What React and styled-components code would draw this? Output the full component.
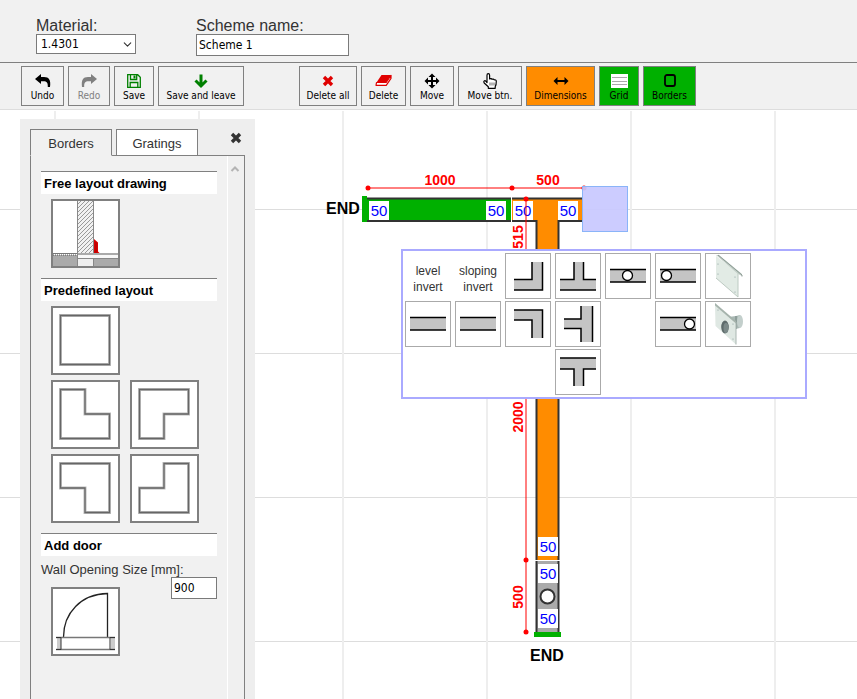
import React, { useState } from "react"
import styled, { createGlobalStyle } from "styled-components"
import { ChevronDown } from "lucide-react"

const GlobalStyle = createGlobalStyle`
    * {
        box-sizing: border-box;
    }

    body {
        margin: 0;
        color: #333;
        background: #fff;
        font-family: "Liberation Sans", Arial, sans-serif;
        font-size: 13px;
    }

    button,
    input,
    select {
        margin: 0;
        border-radius: 0;
        font-family: inherit;
    }
`

const uiFont = `"DejaVu Sans Condensed", "Noto Sans", sans-serif`

const StyledApp = styled.div`
    display: flex;
    flex-direction: column;
    height: 100vh;
    overflow: hidden;
`

const StyledHeader = styled.header`
    display: flex;
    gap: 60px;
    padding: 18px 36px 6px;
    background: #f1f1f1;
    border-bottom: 1px solid #808080;
`

const StyledField = styled.div`
    display: flex;
    flex-direction: column;
    align-items: flex-start;
`

const StyledLabel = styled.label`
    font-size: 16px;
    line-height: 16px;
`

const StyledSelectBox = styled.div`
    position: relative;
    width: 100px;

    svg {
        position: absolute;
        top: 4px;
        right: 2px;
        pointer-events: none;
    }
`

const StyledSelect = styled.select`
    display: block;
    width: 100%;
    height: 20px;
    padding: 0 4px;
    color: #000;
    background: #fff;
    border: 1px solid #7a7a7a;
    font-family: ${uiFont};
    font-size: 12px;
    appearance: none;
`

const StyledInput = styled.input`
    width: ${(props) => props.$width};
    height: 22px;
    padding: 0 2px;
    color: #000;
    background: #fff;
    border: 1px solid #7a7a7a;
    font-family: ${uiFont};
    font-size: 12px;
`

const StyledToolbar = styled.nav`
    display: flex;
    gap: 55px;
    padding: 3px 21px;
    background: #f1f1f1;
    border-bottom: 1px solid #ddd;
`

const StyledToolGroup = styled.div`
    display: flex;
    gap: 4px;
`

const StyledTool = styled.button`
    display: flex;
    flex-direction: column;
    align-items: center;
    width: ${(props) => props.$width}px;
    height: 40px;
    padding: 6px 0 0;
    color: ${(props) => (props.disabled ? "#808080" : "#000")};
    background: ${(props) => props.$background || "#f1f1f1"};
    border: 1px solid #808080;
    font-family: ${uiFont};
    font-size: 10px;
    line-height: 14px;
    white-space: nowrap;

    svg {
        flex: none;
        display: block;
        height: 16px;
        color: ${(props) => props.$iconColor || "inherit"};
    }
`

const StyledCanvas = styled.main`
    position: relative;
    display: flex;
    flex: 1;
    min-height: 0;
`

const StyledDrawing = styled.svg`
    position: absolute;
    inset: 0;
    width: 100%;
    height: 100%;
    font-family: "Liberation Sans", Arial, sans-serif;
`

const StyledSidebar = styled.aside`
    position: relative;
    display: flex;
    flex-direction: column;
    width: 235px;
    margin: 9px 0 0 20px;
    padding: 10px 10px 0;
    background: #eee;
`

const StyledTabs = styled.div`
    display: flex;
    align-items: flex-start;
    gap: 4px;
`

const StyledTab = styled.button`
    position: relative;
    width: 82px;
    height: 27px;
    margin-bottom: -1px;
    padding: 2px 0 0;
    color: #333;
    background: ${(props) => (props.$active ? "#f1f1f1" : "#fff")};
    border: 1px solid #808080;
    border-bottom-color: ${(props) => (props.$active ? "#f1f1f1" : "#808080")};
    font-size: 13px;
    z-index: 1;
`

const StyledClose = styled.button`
    display: flex;
    margin-left: auto;
    padding: 1px 3px;
    color: #333;
    background: none;
    border: 0;
`

const StyledPanel = styled.div`
    display: flex;
    flex: 1;
    min-height: 0;
    overflow: hidden;
    background: #f1f1f1;
    border: 1px solid #808080;
    border-bottom: 0;
`

const StyledPanelContent = styled.div`
    flex: 1;
    display: flex;
    flex-direction: column;
    gap: 10px;
    padding: 15px 10px;
`

const StyledScrollTrack = styled.div`
    width: 17px;
    padding: 5px 2px;
    color: #b4b4b4;
    background: #f0f0f0;
    border-left: 1px solid #fff;
`

const StyledHeading = styled.h2`
    height: 23px;
    margin: 0 0 5px;
    padding: 0 3px;
    color: #000;
    background: #fff;
    border-top: 1px solid #808080;
    font-size: 13px;
    line-height: 23px;
`

const StyledThumbs = styled.div`
    display: grid;
    grid-template-columns: 69px 69px;
    gap: 5px 10px;
    margin-left: 10px;
`

const StyledThumb = styled.button`
    display: block;
    width: 69px;
    height: 69px;
    padding: 0;
    background: #fff;
    border: 2px solid #808080;

    svg {
        display: block;
    }
`

const StyledDoorLabel = styled.label`
    display: block;
    padding-top: 1px;
    font-size: 13px;
    line-height: 15px;
`

const StyledDoorRow = styled.div`
    display: flex;
    align-items: flex-start;
    justify-content: space-between;

    ${StyledThumb} {
        margin: 10px 0 0 10px;
    }
`

/* popup with the channel parts, lies over the drawing */
const StyledPicker = styled.div`
    position: absolute;
    top: 139px;
    left: 401px;
    display: grid;
    grid-template-columns: repeat(7, 46px);
    grid-template-rows: repeat(3, 46px);
    gap: 2px 4px;
    width: 406px;
    padding: 2px;
    background: #fff;
    border: 2px solid #aaf;
`

const StyledPickerLabel = styled.span`
    align-self: center;
    padding-top: 6px;
    font-size: 12px;
    line-height: 16px;
    text-align: center;
`

const StyledPart = styled.button`
    grid-column: ${(props) => props.$column};
    grid-row: ${(props) => props.$row};
    padding: 0;
    background: #fff;
    border: 1px solid #aaa;

    svg {
        display: block;
    }
`

const UndoIcon = ({ flip }) => (
    <svg width="16" height="16" viewBox="0 0 16 16">
        <path
            transform={flip ? "translate(16 0) scale(-1 1)" : undefined}
            d="M0 6 6 1v3h3c5 0 7 3 6 10h-2.200c.2-4.200-1-5.800-4.300-5.800H6V11z"
            fill="currentColor"
        />
    </svg>
)

const SaveIcon = () => (
    <svg width="14" height="16" viewBox="0 0 14 16">
        <path
            d="M.7 1.700h10l2.600 2.600v10H.7zM3.500 2v4.500h6.200V2M3.200 14V9.500h7.600V14"
            fill="none"
            stroke="currentColor"
            strokeWidth="1.300"
        />
        <path d="M6.500 2.500h2v3h-2z" fill="currentColor" />
    </svg>
)

const DownIcon = () => (
    <svg width="14" height="16" viewBox="0 0 14 16">
        <path
            d="M7 1.500v11M1.500 7.500 7 13l5.500-5.500"
            fill="none"
            stroke="currentColor"
            strokeWidth="3"
        />
    </svg>
)

const CrossIcon = () => (
    <svg width="12" height="16" viewBox="0 0 12 16">
        <path
            d="M2 4l8 8M10 4l-8 8"
            fill="none"
            stroke="currentColor"
            strokeWidth="3.400"
        />
    </svg>
)

const EraserIcon = () => (
    <svg width="17" height="16" viewBox="0 0 17 16">
        <path d="M6.500 2H16.500l-5 7.500h-10z" fill="currentColor" />
        <path
            d="M1.500 9.500h9.700l4.800-7v2.800l-4.800 7H1z"
            fill="#fff"
            stroke="currentColor"
            strokeWidth="1.200"
            strokeLinejoin="round"
        />
    </svg>
)

const MoveIcon = () => (
    <svg width="16" height="16" viewBox="0 0 16 16">
        <path
            d="M8 .5 11.500 4H9v3h3V4.500L15.500 8 12 11.500V9H9v3h2.500L8 15.500 4.500 12H7V9H4v2.500L.5 8 4 4.500V7h3V4H4.500z"
            fill="currentColor"
        />
    </svg>
)

const HandIcon = () => (
    <svg width="16" height="16" viewBox="0 0 16 16">
        <path
            d="M5 9.500V2.200c0-2 2.600-2 2.600 0V6c.8-.7 2-.5 2.400.3.900-.5 1.900-.2 2.200.6 1-.4 2.100.1 2.100 1.300 0 3-.3 4.200-1.100 5.600v1.500H6.300v-1.500L2.200 10C1 8.200 2.800 7 4 8.400z"
            fill="#fff"
            stroke="currentColor"
            strokeWidth="1.200"
            strokeLinejoin="round"
        />
        <path
            d="M8 9.500v3M10 9.500v3M12 9.500v3"
            stroke="currentColor"
            strokeWidth=".6"
        />
    </svg>
)

const WidthIcon = () => (
    <svg width="16" height="16" viewBox="0 0 16 16">
        <path
            d="M.5 8 4.500 4v3h7V4l4 4-4 4V9h-7v3z"
            fill="currentColor"
        />
    </svg>
)

const GridIcon = () => (
    <svg width="17" height="16" viewBox="0 0 17 16">
        <path d="M0 1h17v14H0z" fill="#fff" />
        <path
            d="M1 4.500h15M1 8.500h15M1 11.500h15"
            stroke="#aaa"
            strokeWidth="1"
        />
    </svg>
)

const BordersIcon = () => (
    <svg width="14" height="16" viewBox="0 0 14 16">
        <rect
            x="2"
            y="2"
            width="10"
            height="11"
            rx="2"
            fill="none"
            stroke="currentColor"
            strokeWidth="1.800"
        />
    </svg>
)

const FreeLayoutIcon = () => (
    <svg width="65" height="65" viewBox="0 0 65 65">
        <defs>
            <pattern
                id="hatch"
                width="4"
                height="4"
                patternUnits="userSpaceOnUse"
            >
                <path d="M-1 5 5-1M-1 1l2-2M3 5l2-2" stroke="#999" />
            </pattern>
        </defs>
        <path d="M24 0h17v52H24z" fill="#f1f1f1" />
        <path d="M24 0h17v52H24z" fill="url(#hatch)" />
        <path d="M24.500 0v52M40.500 0v52" stroke="#888" />
        <path d="M41 38 45 41.500v9l2 2h-6z" fill="#d80000" />
        <path d="M43 41v11" stroke="#a00" />
        <path d="M0 54h24v11H0zM41 58h24v7H41z" fill="#aaa" />
        <path d="M24 58h17v7H24z" fill="#eee" />
        <path d="M24 53h41v4H24z" fill="#f8f8f8" />
        <path d="M24 53h41" stroke="#aaa" strokeWidth="2" />
        <path d="M24 57.500h41M24.500 52v13M40.500 58v7" stroke="#888" />
        <path d="M0 52.500h24" stroke="#777" />
        <path d="M0 54h24" stroke="#555" strokeDasharray="1 1" />
    </svg>
)

const ShapeIcon = ({ d }) => (
    <svg width="65" height="65" viewBox="0 0 65 65" fill="none">
        <path d={d} stroke="#bbb" strokeWidth="3" />
        <path d={d} stroke="#666" strokeWidth="1.300" />
    </svg>
)

const DoorIcon = () => (
    <svg width="65" height="65" viewBox="0 0 65 65" fill="none">
        <path
            d="M10.500 48C10.500 24 28 5 54.500 4.500V48"
            stroke="#222"
            strokeWidth="1.300"
        />
        <path d="M4 49h4v11H4zM58 49h4v11h-4z" fill="#ccc" />
        <path d="M3 48.500h59M3 60.500h59" stroke="#777" strokeWidth="1.400" />
        <path
            d="M3 48.500h5v12H3M62 48.500h-5v12h5"
            stroke="#333"
            strokeWidth="1"
        />
    </svg>
)

const PartIcon = ({ fill, lines, circle }) => (
    <svg width="44" height="44" viewBox="0 0 44 44">
        <path d={fill} fill="#c4c4c4" />
        <path d={lines} fill="none" stroke="#000" strokeWidth="1.500" />
        {circle && (
            <circle
                cx={circle[0]}
                cy={circle[1]}
                r="5"
                fill="#fff"
                stroke="#000"
                strokeWidth="1.300"
            />
        )}
    </svg>
)

const PlateIcon = ({ pipe }) =>
    pipe ? (
        <svg width="44" height="44" viewBox="0 0 44 44">
            <path d="M22 15l8-1 4-1v13l-5 1-7 3z" fill="#a9b8b4" />
            <ellipse cx="34" cy="19.500" rx="3" ry="6.500" fill="#c3cfcc" />
            <path d="M30 14v13" stroke="#869692" strokeWidth="1.500" />
            <path d="M9 3l21 18v21.500L9.500 24z" fill="#dfe8e3" />
            <path d="M9 1l21 18v2.500L9 3.500z" fill="#a5b3ac" />
            <path d="M30 20v22.500" stroke="#a9b6b1" />
            <ellipse cx="19" cy="25" rx="3.800" ry="6.500" fill="#5e6b6b" />
            <ellipse cx="20" cy="26" rx="2.500" ry="5" fill="#7b8988" />
            <circle cx="12" cy="8" r=".6" fill="#899" />
            <circle cx="27" cy="22" r=".6" fill="#899" />
            <circle cx="27" cy="37" r=".6" fill="#899" />
        </svg>
    ) : (
        <svg width="44" height="44" viewBox="0 0 44 44">
            <path d="M10 2l22 17v24L10 24z" fill="#e2ebe5" />
            <path d="M10 1h3l23 19v2l-4-2z" fill="#c2cec7" />
            <path d="M12 1l24 20v1.500" fill="none" stroke="#8c9b94" />
            <path d="M32 19.500V43L10 24" fill="none" stroke="#bdcac2" />
            <circle cx="12" cy="10" r=".6" fill="#899" />
            <circle cx="12" cy="20" r=".6" fill="#899" />
            <circle cx="29" cy="38" r=".6" fill="#899" />
            <circle cx="29" cy="23" r=".6" fill="#899" />
        </svg>
    )

const straight = {
    fill: "M4 15h36v13H4z",
    lines: "M4 15.500h36M4 28h36",
}

const editTools = [
    { title: "Undo", width: 43, icon: <UndoIcon /> },
    { title: "Redo", width: 42, icon: <UndoIcon flip />, disabled: true },
    { title: "Save", width: 40, icon: <SaveIcon />, iconColor: "#008000" },
    {
        title: "Save and leave",
        width: 86,
        icon: <DownIcon />,
        iconColor: "#008000",
    },
]

const drawTools = [
    {
        title: "Delete all",
        width: 58,
        icon: <CrossIcon />,
        iconColor: "#e00000",
    },
    { title: "Delete", width: 45, icon: <EraserIcon />, iconColor: "#e00000" },
    { title: "Move", width: 44, icon: <MoveIcon /> },
    { title: "Move btn.", width: 64, icon: <HandIcon /> },
    {
        title: "Dimensions",
        width: 69,
        icon: <WidthIcon />,
        background: "#ff8c00",
    },
    { title: "Grid", width: 40, icon: <GridIcon />, background: "#00b000" },
    {
        title: "Borders",
        width: 53,
        icon: <BordersIcon />,
        background: "#00b000",
    },
]

const layoutList = [
    { title: "L shape", d: "M7.500 7.500H32V32h24.500v24.500h-49z" },
    { title: "L shape down", d: "M7.500 7.500h49V32H32v24.500H7.500z" },
    { title: "L shape left", d: "M7.500 7.500h49v49H32V32H7.500z" },
    { title: "L shape up", d: "M32 7.500h24.500v49h-49V32H32z" },
]

const partList = [
    {
        title: "Corner up",
        column: 3,
        row: 1,
        icon: (
            <PartIcon
                fill="M8 25.500h18V8h10.500v28H8z"
                lines="M8 25.500h18V8M8 36h28.500V8"
            />
        ),
    },
    {
        title: "Junction up",
        column: 4,
        row: 1,
        icon: (
            <PartIcon
                fill="M4 25.500h14V8h9.500v17.500H40V36H4z"
                lines="M4 25.500h14V8M27.500 8v17.500H40M4 36h36"
            />
        ),
    },
    {
        title: "Outlet in the middle",
        column: 5,
        row: 1,
        icon: <PartIcon {...straight} circle={[21.5, 21.5]} />,
    },
    {
        title: "Outlet left",
        column: 6,
        row: 1,
        icon: <PartIcon {...straight} circle={[10.5, 21.5]} />,
    },
    { title: "End plate", column: 7, row: 1, icon: <PlateIcon /> },
    {
        title: "Level invert",
        column: 1,
        row: 2,
        icon: <PartIcon {...straight} />,
    },
    {
        title: "Sloping invert",
        column: 2,
        row: 2,
        icon: <PartIcon {...straight} />,
    },
    {
        title: "Corner down",
        column: 3,
        row: 2,
        icon: (
            <PartIcon
                fill="M8 8h28.500v28H26V18H8z"
                lines="M8 8h28.500v28M8 18h18v18"
            />
        ),
    },
    {
        title: "Junction left",
        column: 4,
        row: 2,
        icon: (
            <PartIcon
                fill="M8 17h17V4h11.500v36H25V26.500H8z"
                lines="M8 17h17V4M8 26.500h17V40M36.500 4v36"
            />
        ),
    },
    {
        title: "Outlet right",
        column: 6,
        row: 2,
        icon: <PartIcon {...straight} circle={[33.5, 22]} />,
    },
    { title: "End plate with pipe", column: 7, row: 2, icon: <PlateIcon pipe /> },
    {
        title: "Junction down",
        column: 4,
        row: 3,
        icon: (
            <PartIcon
                fill="M4 8h36v11H27.500v17H18V19H4z"
                lines="M4 8h36M4 19h14v17M27.500 36V19H40"
            />
        ),
    },
]

const sizeLabels = [
    [379, 101],
    [496, 101],
    [523, 101],
    [568, 101],
    [548, 437],
    [548, 464],
    [548, 509],
]

const dots = [
    [368, 78],
    [512, 78],
    [584, 78],
    [526, 89],
    [526, 450],
    [526, 522],
]

const dimensions = [
    { text: "1000", x: 440, y: 75 },
    { text: "500", x: 548, y: 75 },
    { text: "515", x: 523, y: 127, vertical: true },
    { text: "2000", x: 523, y: 307, vertical: true },
    { text: "500", x: 523, y: 487, vertical: true },
]

const ToolGroup = ({ tools }) => (
    <StyledToolGroup>
        {tools.map((item) => (
            <StyledTool
                key={item.title}
                type="button"
                disabled={item.disabled}
                $width={item.width}
                $background={item.background}
                $iconColor={item.iconColor}
            >
                {item.icon}
                {item.title}
            </StyledTool>
        ))}
    </StyledToolGroup>
)

const Drawing = () => (
    <StyledDrawing>
        <defs>
            <pattern
                id="grid"
                x="54"
                y="99"
                width="144"
                height="144"
                patternUnits="userSpaceOnUse"
            >
                <path d="M0 0h144v1H0z" fill="#ddd" />
                <path d="M0 0h2v144H0z" fill="#eee" />
            </pattern>
        </defs>
        <rect y="1" width="100%" height="100%" fill="url(#grid)" />

        {/* channels */}
        <path d="M367 88h144v23H367z" fill="#00b000" />
        <path d="M512 88h71v23h-24v339h-23V111h-24z" fill="#ff8c00" />
        <path d="M536 451h23v71h-23z" fill="#aaa" />
        <path
            d="M367 88.500h216M367 111h169.500v411M583 111h-24.500v411"
            fill="none"
            stroke="#333"
            strokeWidth="2"
        />
        <path d="M511.500 87v25M535 450.500h25" stroke="#fff" />
        <path d="M362 86h5v26h-5zM534 522h27v5h-27z" fill="#00b000" />
        <circle
            cx="547.500"
            cy="486.500"
            r="7"
            fill="#fff"
            stroke="#333"
            strokeWidth="2"
        />

        {sizeLabels.map(([x, y]) => (
            <g key={`${x}-${y}`}>
                <rect x={x - 10} y={y - 10} width="20" height="19" fill="#fff" />
                <text
                    x={x}
                    y={y + 5}
                    fill="#00f"
                    fontSize="15"
                    textAnchor="middle"
                >
                    50
                </text>
            </g>
        ))}

        {/* dimension lines */}
        <path d="M368 78h216M526 89v433" stroke="#f00" />
        {dots.map(([x, y]) => (
            <circle key={`${x}-${y}`} cx={x} cy={y} r="2.500" fill="#f00" />
        ))}
        {dimensions.map(({ text, x, y, vertical }) => (
            <text
                key={`${x}-${y}`}
                transform={`translate(${x} ${y}) rotate(${vertical ? -90 : 0})`}
                fill="#f00"
                fontSize="14"
                fontWeight="bold"
                textAnchor="middle"
            >
                {text}
            </text>
        ))}

        <g fill="#000" fontSize="16" fontWeight="bold" textAnchor="middle">
            <text x="343" y="104">
                END
            </text>
            <text x="547" y="551">
                END
            </text>
        </g>

        <rect
            x="582.500"
            y="76.500"
            width="45"
            height="45"
            fill="#c8c8ff"
            fillOpacity=".92"
            stroke="#8ab4f8"
        />
    </StyledDrawing>
)

const Sidebar = () => {
    const [tab, setTab] = useState("Borders")
    const [doorSize, setDoorSize] = useState("900")

    return (
        <StyledSidebar>
            <StyledTabs>
                {["Borders", "Gratings"].map((name) => (
                    <StyledTab
                        key={name}
                        type="button"
                        $active={tab === name}
                        onClick={() => setTab(name)}
                    >
                        {name}
                    </StyledTab>
                ))}
                <StyledClose type="button" aria-label="Close">
                    <CrossIcon />
                </StyledClose>
            </StyledTabs>
            <StyledPanel>
                <StyledPanelContent>
                    <section>
                        <StyledHeading>Free layout drawing</StyledHeading>
                        <StyledThumbs>
                            <StyledThumb type="button" aria-label="Free layout">
                                <FreeLayoutIcon />
                            </StyledThumb>
                        </StyledThumbs>
                    </section>
                    <section>
                        <StyledHeading>Predefined layout</StyledHeading>
                        <StyledThumbs>
                            <StyledThumb type="button" aria-label="Square">
                                <ShapeIcon d="M7.500 7.500h49v49h-49z" />
                            </StyledThumb>
                            <span />
                            {layoutList.map((item) => (
                                <StyledThumb
                                    key={item.title}
                                    type="button"
                                    aria-label={item.title}
                                >
                                    <ShapeIcon d={item.d} />
                                </StyledThumb>
                            ))}
                        </StyledThumbs>
                    </section>
                    <section>
                        <StyledHeading>Add door</StyledHeading>
                        <StyledDoorLabel htmlFor="door">
                            Wall Opening Size [mm]:
                        </StyledDoorLabel>
                        <StyledDoorRow>
                            <StyledThumb type="button" aria-label="Door">
                                <DoorIcon />
                            </StyledThumb>
                            <StyledInput
                                id="door"
                                type="text"
                                $width="46px"
                                value={doorSize}
                                onChange={(e) => setDoorSize(e.target.value)}
                            />
                        </StyledDoorRow>
                    </section>
                </StyledPanelContent>
                <StyledScrollTrack>
                    <svg width="10" height="8" viewBox="0 0 10 8">
                        <path
                            d="M1.500 6 5 2.500 8.500 6"
                            fill="none"
                            stroke="currentColor"
                            strokeWidth="2"
                        />
                    </svg>
                </StyledScrollTrack>
            </StyledPanel>
        </StyledSidebar>
    )
}

const App = () => {
    const [schemeName, setSchemeName] = useState("Scheme 1")

    return (
        <StyledApp>
            <GlobalStyle />
            <StyledHeader>
                <StyledField>
                    <StyledLabel htmlFor="material">Material:</StyledLabel>
                    <StyledSelectBox>
                        <StyledSelect id="material">
                            <option>1.4301</option>
                        </StyledSelect>
                        <ChevronDown size={13} strokeWidth={2} />
                    </StyledSelectBox>
                </StyledField>
                <StyledField>
                    <StyledLabel htmlFor="scheme">Scheme name:</StyledLabel>
                    <StyledInput
                        id="scheme"
                        type="text"
                        $width="153px"
                        value={schemeName}
                        onChange={(e) => setSchemeName(e.target.value)}
                    />
                </StyledField>
            </StyledHeader>
            <StyledToolbar>
                <ToolGroup tools={editTools} />
                <ToolGroup tools={drawTools} />
            </StyledToolbar>
            <StyledCanvas>
                <Drawing />
                <Sidebar />
                <StyledPicker>
                    <StyledPickerLabel>level invert</StyledPickerLabel>
                    <StyledPickerLabel>sloping invert</StyledPickerLabel>
                    {partList.map((item) => (
                        <StyledPart
                            key={item.title}
                            type="button"
                            aria-label={item.title}
                            $column={item.column}
                            $row={item.row}
                        >
                            {item.icon}
                        </StyledPart>
                    ))}
                </StyledPicker>
            </StyledCanvas>
        </StyledApp>
    )
}

export default App
